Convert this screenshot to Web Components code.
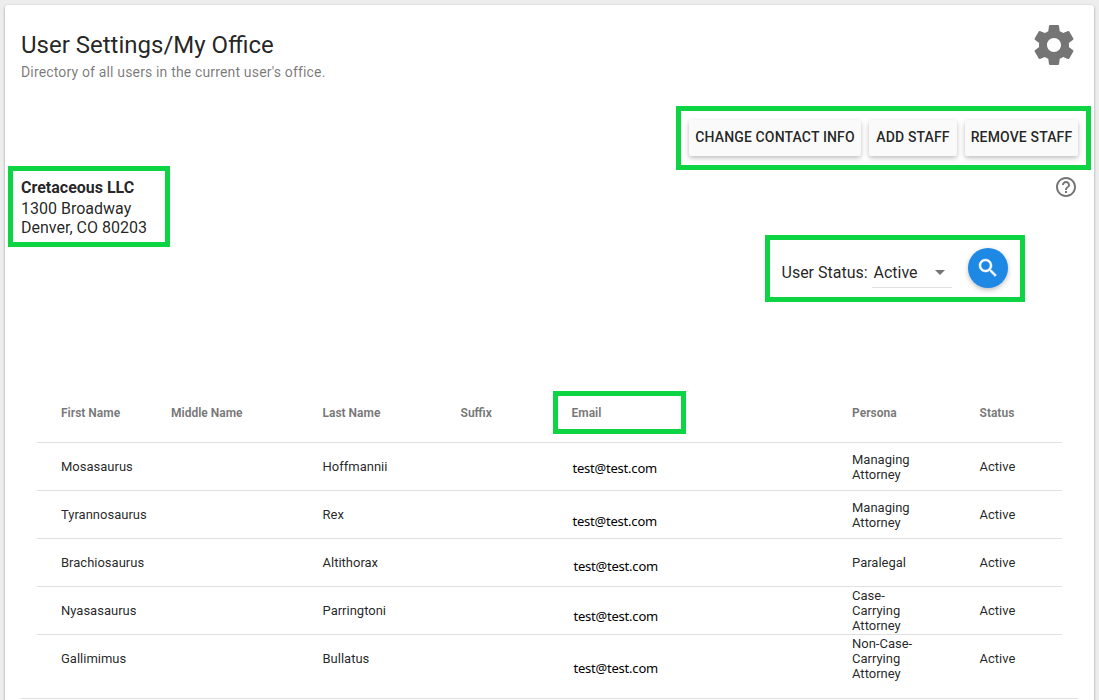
<!DOCTYPE html>
<html lang="en">
<head>
<meta charset="utf-8">
<title>User Settings/My Office</title>
<style>
  html, body {
    margin: 0;
    height: 100%;
    overflow: hidden;
    background: #ededed;
  }
  body {
    font-family: Roboto, "Liberation Sans", sans-serif;
    color: rgba(0, 0, 0, 0.87);
  }
</style>
</head>
<body>
<office-card>
  <page-heading slot="heading">
    User Settings/My Office
    <span slot="subtitle">Directory of all users in the current user's office.</span>
  </page-heading>
  <mark-box slot="actions" class="actions">
    <raised-button style="--width: 172px">Change Contact Info</raised-button>
    <raised-button style="--width: 88px">Add Staff</raised-button>
    <raised-button style="--width: 113px">Remove Staff</raised-button>
  </mark-box>
  <mark-box slot="address" class="address">
    <office-address>
      Cretaceous LLC
      <span slot="street">1300 Broadway</span>
      <span slot="city">Denver, CO 80203</span>
    </office-address>
  </mark-box>
  <mark-box slot="filter" class="filter">
    <status-filter label="User Status:" value="Active"></status-filter>
  </mark-box>
  <user-table></user-table>
</office-card>

<script>
customElements.define(
  'office-card',
  class extends HTMLElement {
    constructor() {
      super();
      const shadowRoot = this.attachShadow({ mode: 'open' });
      shadowRoot.innerHTML = `<style>
        :host {
          display: flex;
          flex-direction: column;
          box-sizing: border-box;
          height: 720px;
          margin: 5px 5px 0;
          background: #fff;
          border-radius: 3px;
          box-shadow: 0 1px 3px rgba(0, 0, 0, 0.25), 0 1px 2px rgba(0, 0, 0, 0.15);
        }
        header {
          display: flex;
          justify-content: space-between;
          align-items: flex-start;
          height: 101px;
          padding: 0 16px;
          box-sizing: border-box;
        }
        .gear {
          width: 48px;
          height: 48px;
          margin: 16px 0 0;
          fill: #757575;
        }
        .actions {
          display: flex;
          justify-content: flex-end;
          height: 60px;
          padding-right: 3px;
        }
        .details {
          display: flex;
          justify-content: space-between;
          align-items: flex-start;
          height: 69px;
          padding: 0 16px 0 3px;
        }
        .help {
          width: 24px;
          height: 24px;
          margin-top: 9px;
          fill: #757575;
        }
        .filter {
          display: flex;
          justify-content: flex-end;
          height: 152px;
          padding-right: 69px;
        }
        .list {
          margin: 0 16px;
          padding: 0 16px 15px;
          border-bottom: 1px solid #e0e0e0;
        }
        </style>
        <header>
          <slot name="heading"></slot>
          <svg class="gear" viewBox="0 0 24 24"><path d="M19.43 12.98c.04-.32.07-.64.07-.98s-.03-.66-.07-.98l2.11-1.65c.19-.15.24-.42.12-.64l-2-3.46c-.12-.22-.39-.3-.61-.22l-2.49 1c-.52-.4-1.08-.73-1.69-.98l-.38-2.65C14.46 2.18 14.25 2 14 2h-4c-.25 0-.46.18-.49.42l-.38 2.65c-.61.25-1.17.59-1.69.98l-2.49-1c-.23-.09-.49 0-.61.22l-2 3.46c-.13.22-.07.49.12.64l2.11 1.65c-.04.32-.07.65-.07.98s.03.66.07.98l-2.11 1.65c-.19.15-.24.42-.12.64l2 3.46c.12.22.39.3.61.22l2.49-1c.52.4 1.08.73 1.69.98l.38 2.65c.03.24.24.42.49.42h4c.25 0 .46-.18.49-.42l.38-2.65c.61-.25 1.17-.59 1.69-.98l2.49 1c.23.09.49 0 .61-.22l2-3.46c.12-.22.07-.49-.12-.64l-2.11-1.65zM12 15.5c-1.93 0-3.5-1.57-3.5-3.5s1.57-3.5 3.5-3.5 3.5 1.57 3.5 3.5-1.57 3.5-3.5 3.5z"/></svg>
        </header>
        <div class="actions"><slot name="actions"></slot></div>
        <div class="details">
          <slot name="address"></slot>
          <svg class="help" viewBox="0 0 24 24"><path d="M11 18h2v-2h-2v2zm1-16C6.480 2 2 6.480 2 12s4.480 10 10 10 10-4.480 10-10S17.520 2 12 2zm0 18c-4.410 0-8-3.590-8-8s3.590-8 8-8 8 3.590 8 8-3.590 8-8 8zm0-14c-2.210 0-4 1.790-4 4h2c0-1.100.9-2 2-2s2 .9 2 2c0 2-3 1.750-3 5h2c0-2.250 3-2.500 3-5 0-2.210-1.790-4-4-4z"/></svg>
        </div>
        <div class="filter"><slot name="filter"></slot></div>
        <div class="list"><slot></slot></div>`;
    }
  }
);

customElements.define(
  'page-heading',
  class extends HTMLElement {
    constructor() {
      super();
      const shadowRoot = this.attachShadow({ mode: 'open' });
      shadowRoot.innerHTML = `<style>
        :host {
          display: block;
          padding-top: 24px;
        }
        h1 {
          margin: 0;
          font-size: 24px;
          font-weight: 400;
          line-height: 32px;
        }
        p {
          margin: 1px 0 0;
          font-size: 14px;
          letter-spacing: 0.16px;
          line-height: 20px;
          color: rgba(0, 0, 0, 0.54);
        }
        </style>
        <h1><slot></slot></h1>
        <p><slot name="subtitle"></slot></p>`;
    }
  }
);

// green frame drawn round its content
customElements.define(
  'mark-box',
  class extends HTMLElement {
    constructor() {
      super();
      const shadowRoot = this.attachShadow({ mode: 'open' });
      shadowRoot.innerHTML = `<style>
        :host {
          display: flex;
          box-sizing: border-box;
          border: 5px solid #0cd443;
        }
        :host(.actions) {
          width: 415px;
          height: 64px;
          gap: 8px;
          padding: 9px 0 0 8px;
        }
        :host(.address) {
          width: 162px;
          height: 81px;
          padding: 6px 0 0 8px;
        }
        :host(.filter) {
          width: 260px;
          height: 67px;
        }
        :host(.cell) {
          width: 133px;
          height: 43px;
          margin: 0 0 2px -18.5px;
          padding: 2px 0 0 13.5px;
          align-items: center;
        }
        </style>
        <slot></slot>`;
    }
  }
);

customElements.define(
  'raised-button',
  class extends HTMLElement {
    constructor() {
      super();
      const shadowRoot = this.attachShadow({ mode: 'open' });
      shadowRoot.innerHTML = `<style>
        :host {
          display: block;
          flex: none;
          width: var(--width);
          height: 36px;
        }
        button {
          width: 100%;
          height: 36px;
          padding: 0 0 2px;
          border: 0;
          border-radius: 2px;
          background: #fafafa;
          box-shadow: 0 2px 5px rgba(0, 0, 0, 0.26);
          color: rgba(0, 0, 0, 0.87);
          font: 500 14px/34px Roboto, "Liberation Sans", sans-serif;
          letter-spacing: 0.14px;
          text-transform: uppercase;
          white-space: nowrap;
        }
        </style>
        <button type="button"><slot></slot></button>`;
    }
  }
);

customElements.define(
  'office-address',
  class extends HTMLElement {
    constructor() {
      super();
      const shadowRoot = this.attachShadow({ mode: 'open' });
      shadowRoot.innerHTML = `<style>
        :host {
          display: block;
          font-size: 16px;
          line-height: 19px;
          white-space: nowrap;
        }
        b {
          display: block;
          font-weight: 700;
          line-height: 22px;
        }
        </style>
        <b><slot></slot></b>
        <div><slot name="street"></slot></div>
        <div><slot name="city"></slot></div>`;
    }
  }
);

customElements.define(
  'status-filter',
  class extends HTMLElement {
    connectedCallback() {
      const shadowRoot = this.attachShadow({ mode: 'open' });
      shadowRoot.innerHTML = `<style>
        :host {
          display: flex;
          align-items: flex-start;
          font-size: 16px;
          padding-left: 11.5px;
        }
        label {
          width: 90.5px;
          padding-top: 23px;
          line-height: 20px;
          white-space: nowrap;
        }
        .select {
          display: flex;
          justify-content: space-between;
          align-items: center;
          box-sizing: border-box;
          width: 80px;
          height: 31px;
          margin-top: 17px;
          padding: 0 7.5px 0 1.5px;
          border-bottom: 1px solid #e0e0e0;
        }
        .arrow {
          border: 5px solid transparent;
          border-top-color: #757575;
          border-bottom: 0;
        }
        .search {
          display: flex;
          align-items: center;
          justify-content: center;
          width: 40px;
          height: 40px;
          margin: 8px 0 0 16px;
          padding: 0;
          border: 0;
          border-radius: 50%;
          background: #1e88e5;
          box-shadow: 0 2px 5px rgba(0, 0, 0, 0.26);
        }
        svg {
          width: 24px;
          height: 24px;
          fill: #fff;
        }
        </style>
        <label>${this.getAttribute('label')}</label>
        <div class="select">${this.getAttribute('value')}<span class="arrow"></span></div>
        <button class="search" type="button">
          <svg viewBox="0 0 24 24"><path d="M15.500 14h-.79l-.28-.27C15.410 12.590 16 11.110 16 9.500 16 5.910 13.090 3 9.500 3S3 5.910 3 9.500 5.910 16 9.500 16c1.610 0 3.090-.59 4.230-1.570l.27.28v.79l5 4.990L20.490 19l-4.990-5zm-6 0C7.010 14 5 11.990 5 9.500S7.010 5 9.500 5 14 7.010 14 9.500 11.990 14 9.500 14z" stroke="#fff" stroke-width=".4"/></svg>
        </button>`;
    }
  }
);

// each user: first, last, email, persona, status, then the email's left and top padding
const users = [
  ['Mosasaurus', 'Hoffmannii', 'test@test.com', 'Managing Attorney', 'Active', 1, 3],
  ['Tyrannosaurus', 'Rex', 'test@test.com', 'Managing Attorney', 'Active', 1, 13],
  ['Brachiosaurus', 'Altithorax', 'test@test.com', 'Paralegal', 'Active', 2, 7],
  ['Nyasasaurus', 'Parringtoni', 'test@test.com', 'Case-Carrying Attorney', 'Active', 2, 11],
  ['Gallimimus', 'Bullatus', 'test@test.com', 'Non-Case-Carrying Attorney', 'Active', 2, 19]
];

customElements.define(
  'user-table',
  class extends HTMLElement {
    constructor() {
      super();
      const shadowRoot = this.attachShadow({ mode: 'open' });
      const rows = users
        .map(
          ([first, last, email, persona, status, left, top]) => `
        <div class="row">
          <span>${first}</span><span></span><span>${last}</span><span></span>
          <span class="email" style="padding: ${top}px 0 0 ${left}px">${email}</span>
          <span class="persona">${persona}</span><span>${status}</span>
        </div>`
        )
        .join('');
      shadowRoot.innerHTML = `<style>
        :host {
          display: block;
          font-size: 13px;
          line-height: 15px;
        }
        .row {
          display: grid;
          grid-template-columns: 110px 151.5px 138px 111px 280.5px 127.5px 1fr;
          align-items: center;
          box-sizing: border-box;
          height: 48px;
          padding-left: 24px;
          border-bottom: 1px solid #e0e0e0;
        }
        .row:last-child {
          border-bottom-color: transparent;
        }
        .head {
          height: 56px;
          padding-bottom: 2px;
          color: rgba(0, 0, 0, 0.54);
          font-size: 12px;
          font-weight: 700;
        }
        .persona {
          padding-right: 56px;
        }
        .email {
          color: #000;
          font-family: "Noto Sans", "Open Sans", sans-serif;
          letter-spacing: -0.22px;
        }
        </style>
        <div class="row head">
          <span>First Name</span><span>Middle Name</span><span>Last Name</span><span>Suffix</span>
          <mark-box class="cell">Email</mark-box>
          <span>Persona</span><span>Status</span>
        </div>
        ${rows}`;
    }
  }
);
</script>
</body>
</html>
